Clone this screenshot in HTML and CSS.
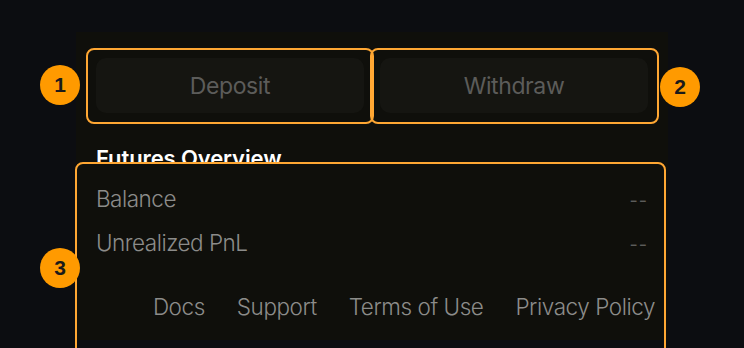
FILE: index.html
```html
<!DOCTYPE html>
<html lang="en">
<head>
<meta charset="utf-8">
<title>Futures</title>
<link rel="stylesheet" href="styles.css">
</head>
<body>
<main class="panel">
  <div class="actions">
    <button class="btn">Deposit</button>
    <button class="btn">Withdraw</button>
  </div>
  <h2 class="heading">Futures Overview</h2>
  <section class="overview">
    <div class="row"><span class="label">Balance</span><span class="value">--</span></div>
    <div class="row"><span class="label">Unrealized PnL</span><span class="value">--</span></div>
    <nav class="footer">
      <a>Docs</a><a>Support</a><a>Terms of Use</a><a>Privacy Policy</a>
    </nav>
  </section>
</main>
<div class="mark mark-1"></div>
<div class="mark mark-2"></div>
<div class="mark mark-3"></div>
<div class="badge badge-1">1</div>
<div class="badge badge-2">2</div>
<div class="badge badge-3">3</div>
</body>
</html>
```
FILE: styles.css
```css
* { box-sizing: border-box; }
html, body { margin: 0; padding: 0; }
body {
  width: 744px;
  height: 348px;
  overflow: hidden;
  background: #0c0d11;
  font-family: Inter, "Noto Sans", sans-serif;
  position: relative;
}
.panel {
  margin: 32px 0 0 76px;
  width: 592px;
  height: 308px;
  padding: 26px 20px 0;
  background: #0f0f0b;
}
.actions {
  display: flex;
  gap: 16px;
  height: 55px;
}
.btn {
  flex: 1;
  border: 0;
  border-radius: 10px;
  background: #151511;
  color: #5c5c5a;
  font-family: Inter, sans-serif;
  font-size: 23px;
  letter-spacing: -0.4px;
  padding: 0;
}
.heading {
  margin: 32px 0 0;
  height: 18px;
  overflow: hidden;
  color: #ffffff;
  font-size: 22px;
  line-height: 26px;
  font-weight: 600;
  letter-spacing: -0.1px;
}
.overview {
  padding-top: 24px;
}
.row {
  display: flex;
  justify-content: space-between;
  align-items: baseline;
  height: 24px;
  line-height: 24px;
  margin-bottom: 20px;
}
.label {
  color: #8c8c8a;
  font-size: 22.5px;
  font-weight: 300;
  letter-spacing: -0.5px;
}
.value {
  color: #5c5c5a;
  font-size: 18px;
  letter-spacing: 1px;
}
.footer {
  display: flex;
  justify-content: flex-end;
  gap: 32px;
  margin-top: 40px;
  margin-right: -7px;
  line-height: 24px;
}
.footer a {
  color: #8c8c8a;
  font-size: 22.5px;
  font-weight: 300;
  letter-spacing: -0.45px;
}
.mark {
  position: absolute;
  border: 2px solid #ffa733;
  border-radius: 8px;
}
.mark-1 { left: 86px; top: 48px; width: 288px; height: 76px; }
.mark-2 { left: 370px; top: 48px; width: 289px; height: 76px; }
.mark-3 { left: 75px; top: 162px; width: 591px; height: 200px; }
.badge {
  position: absolute;
  width: 40px;
  height: 40px;
  border-radius: 50%;
  background: #ff9a00;
  color: #1a1a1a;
  font-size: 21px;
  font-weight: 700;
  line-height: 40px;
  text-align: center;
  font-family: "Liberation Sans", Arial, sans-serif;
}
.badge-1 { left: 40px; top: 65px; }
.badge-2 { left: 660px; top: 67px; }
.badge-3 { left: 40px; top: 248px; }
```
